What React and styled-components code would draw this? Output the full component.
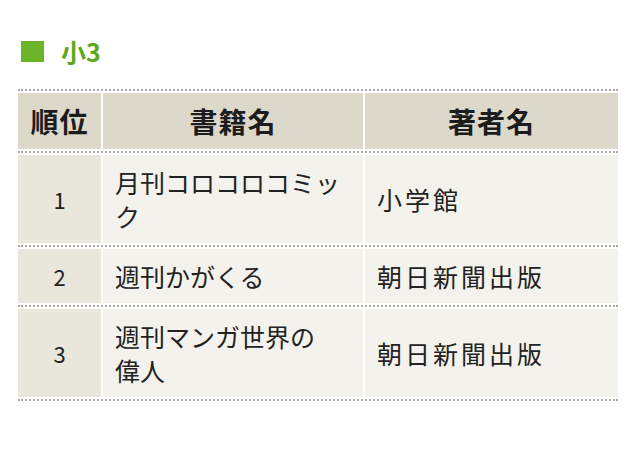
import React from "react";
import styled, { createGlobalStyle } from "styled-components";

const GlobalStyle = createGlobalStyle`
  html, body {
    margin: 0;
    padding: 0;
    background: #ffffff;
  }
  body {
    font-family: "Noto Sans CJK JP", "Noto Sans", sans-serif;
    color: #222222;
  }
`;

const Page = styled.div`
  width: 640px;
  height: 457px;
  padding: 38px 22px 0 18px;
  box-sizing: border-box;
`;

const Heading = styled.h2`
  display: flex;
  align-items: center;
  gap: 17px;
  margin: 0 0 25px 3px;
  height: 26px;
  font-size: 25px;
  font-weight: bold;
  color: #5fa71c;
  line-height: 26px;
`;

const Square = styled.span`
  display: block;
  width: 23px;
  height: 21px;
  background: #6cb528;
`;

const Table = styled.div`
  width: 600px;
  border-top: 2px dotted #aaaaa2;
`;

const Row = styled.div`
  display: grid;
  grid-template-columns: 83px 260px 1fr;
  column-gap: 2px;
  padding: 2px 0;
  border-bottom: 2px dotted #aaaaa2;
`;

const HeadCell = styled.div`
  background: #dcd9cb;
  height: 56px;
  display: flex;
  align-items: center;
  justify-content: center;
  font-size: 28px;
  font-weight: bold;
  letter-spacing: 1px;
  color: #1c1c1c;
`;

const Cell = styled.div`
  background: ${(p) => (p.rank ? "#e9e7dc" : "#f4f2ec")};
  display: flex;
  align-items: center;
  justify-content: ${(p) => (p.rank ? "center" : "flex-start")};
  padding: 10px ${(p) => (p.rank ? "0" : "12px")};
  font-size: ${(p) => (p.rank ? "22px" : "25px")};
  letter-spacing: ${(p) => (p.wide ? "3px" : "0")};
  line-height: 34px;
  white-space: nowrap;
`;

const books = [
  { rank: 1, title: ["月刊コロコロコミッ", "ク"], author: "小学館" },
  { rank: 2, title: ["週刊かがくる"], author: "朝日新聞出版" },
  { rank: 3, title: ["週刊マンガ世界の", "偉人"], author: "朝日新聞出版" },
];

const App = () => (
  <Page>
    <GlobalStyle />
    <Heading>
      <Square />
      小3
    </Heading>
    <Table>
      <Row>
        <HeadCell>順位</HeadCell>
        <HeadCell>書籍名</HeadCell>
        <HeadCell>著者名</HeadCell>
      </Row>
      {books.map((b) => (
        <Row key={b.rank}>
          <Cell rank>{b.rank}</Cell>
          <Cell>
            <span>
              {b.title.map((line, i) => (
                <React.Fragment key={i}>
                  {i > 0 && <br />}
                  {line}
                </React.Fragment>
              ))}
            </span>
          </Cell>
          <Cell wide>{b.author}</Cell>
        </Row>
      ))}
    </Table>
  </Page>
);

export default App;
